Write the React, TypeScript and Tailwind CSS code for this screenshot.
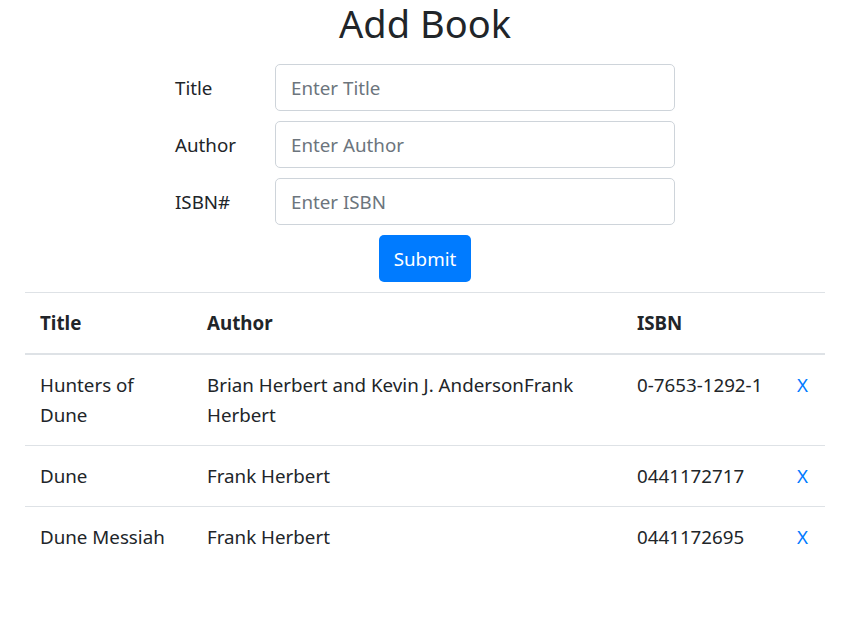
const books = [
    { title: 'Hunters of Dune', author: 'Brian Herbert and Kevin J. AndersonFrank Herbert', isbn: '0-7653-1292-1' },
    { title: 'Dune', author: 'Frank Herbert', isbn: '0441172717' },
    { title: 'Dune Messiah', author: 'Frank Herbert', isbn: '0441172695' },
];

const fields = [
    { label: 'Title', placeholder: 'Enter Title' },
    { label: 'Author', placeholder: 'Enter Author' },
    { label: 'ISBN#', placeholder: 'Enter ISBN' },
];

const App = () => {
    return (
        <div className="min-h-[622px] bg-white pl-[25px] text-[18.75px] leading-[30px] text-[#212529] font-['Noto_Sans','Open_Sans',sans-serif]">
            <div className="w-[800px]">
                {/* Heading */}
                <h1 className="text-center text-[38px] leading-[46px] h-[54px] mb-[10px] font-normal">
                    Add Book
                </h1>

                {/* Form */}
                <form className="w-[500px] mx-auto flex flex-col" onSubmit={(e) => e.preventDefault()}>
                    {fields.map((f) => (
                        <div key={f.label} className="flex items-center mb-[10px]">
                            <label className="w-[100px] shrink-0">{f.label}</label>
                            <input
                                type="text"
                                placeholder={f.placeholder}
                                className="w-[400px] h-[47px] px-[15px] border border-[#ced4da] rounded-[5px] text-[18.75px] placeholder:text-[#6c757d] outline-none"
                            />
                        </div>
                    ))}
                    <div className="flex justify-center">
                        <button
                            type="submit"
                            className="h-[47px] px-[15px] bg-[#007bff] text-white rounded-[5px] text-[18.75px]"
                        >
                            Submit
                        </button>
                    </div>
                </form>

                {/* Book list */}
                <table className="w-[800px] mt-[10px] border-collapse table-fixed">
                    <colgroup>
                        <col className="w-[167px]" />
                        <col className="w-[430px]" />
                        <col className="w-[160px]" />
                        <col />
                    </colgroup>
                    <thead>
                        <tr className="border-t border-[#dee2e6] border-b-2">
                            <th className="text-left font-bold p-[15px]">Title</th>
                            <th className="text-left font-bold p-[15px]">Author</th>
                            <th className="text-left font-bold p-[15px]">ISBN</th>
                            <th className="p-[15px]"></th>
                        </tr>
                    </thead>
                    <tbody>
                        {books.map((b) => (
                            <tr key={b.isbn} className="border-t border-[#dee2e6] align-top">
                                <td className="p-[15px]">{b.title}</td>
                                <td className="p-[15px]">{b.author}</td>
                                <td className="p-[15px] whitespace-nowrap">{b.isbn}</td>
                                <td className="p-[15px]">
                                    <a href="#" className="text-[#007bff]">X</a>
                                </td>
                            </tr>
                        ))}
                    </tbody>
                </table>
            </div>
        </div>
    );
};

export default App;
